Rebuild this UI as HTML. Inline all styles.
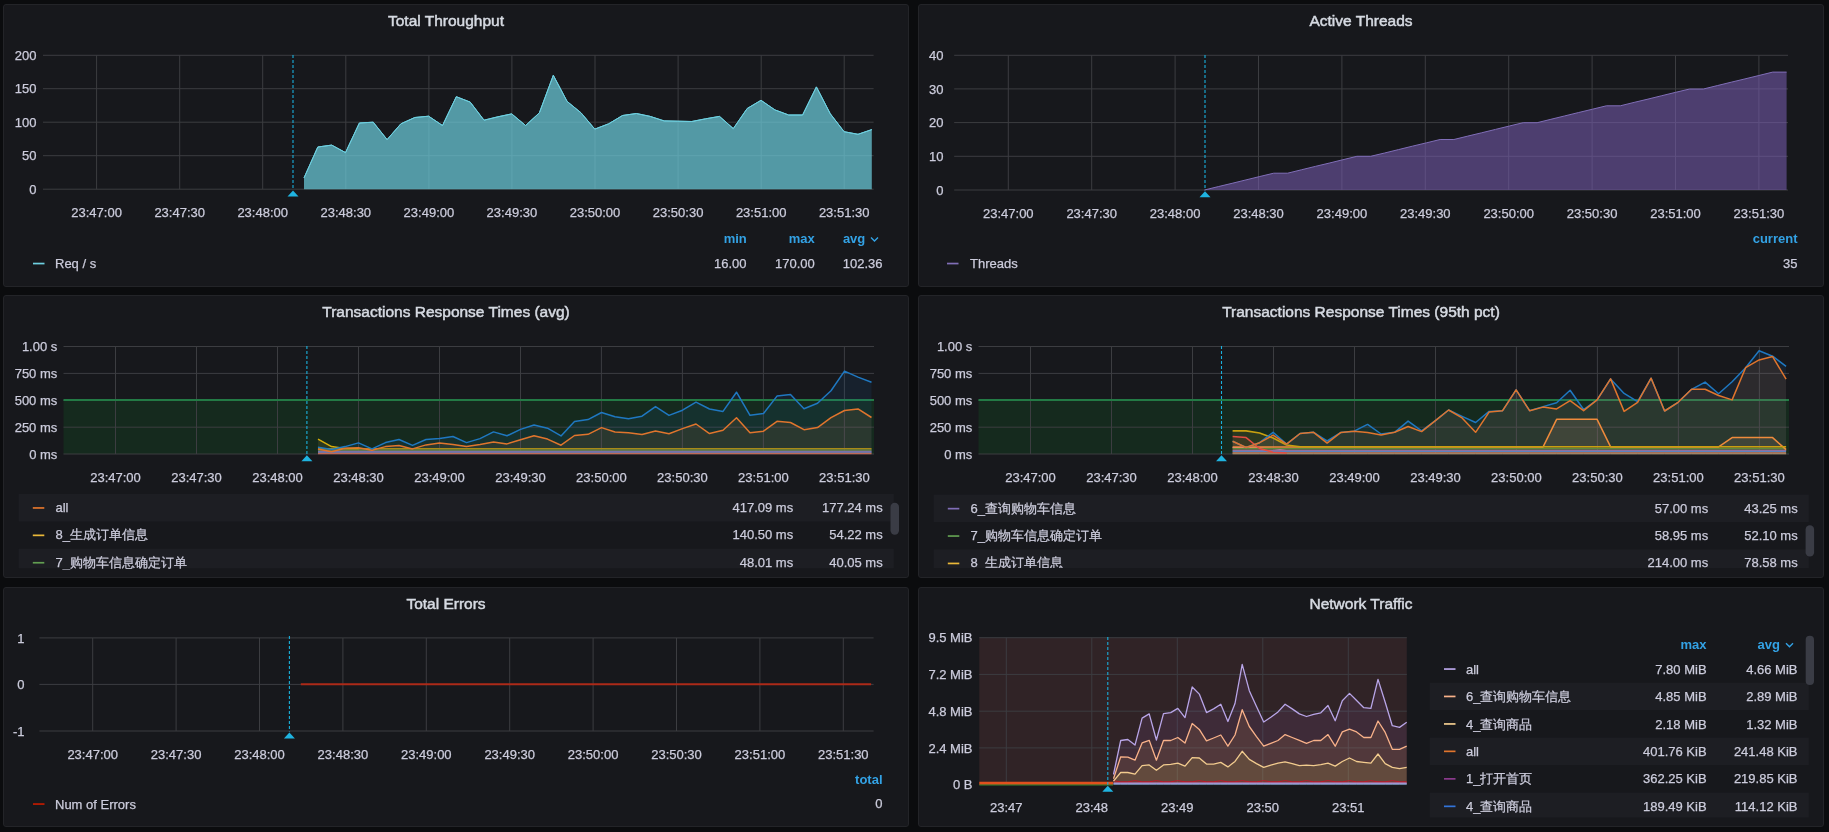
<!DOCTYPE html>
<html><head><meta charset="utf-8"><style>
html,body{margin:0;padding:0;background:#0b0c0e;width:1829px;height:832px;overflow:hidden}
.panel{position:absolute;background:#17181c;border:1px solid #232428;border-radius:3px}
svg{position:absolute;left:0;top:0;will-change:transform}
text{font-family:"Liberation Sans", sans-serif;}
.title{font-size:15.5px;fill:#d6dae2;stroke:#d6dae2;stroke-width:0.5px}
.lbl{font-size:13px;fill:#ccccdc;stroke:#ccccdc;stroke-width:0.25px}
.hdr{font-size:13px;font-weight:bold;fill:#33a2e5;}
</style></head><body>
<div class="panel" style="left:3px;top:4px;width:904px;height:281px"></div><div class="panel" style="left:918px;top:4px;width:904px;height:281px"></div><div class="panel" style="left:3px;top:295px;width:904px;height:281px"></div><div class="panel" style="left:918px;top:295px;width:904px;height:281px"></div><div class="panel" style="left:3px;top:587px;width:904px;height:238px"></div><div class="panel" style="left:918px;top:587px;width:904px;height:238px"></div>
<svg width="1829" height="832" viewBox="0 0 1829 832">
<text x="446.0" y="26.4" text-anchor="middle" class="title">Total Throughput</text>
<line x1="43.0" y1="55.3" x2="873.6" y2="55.3" stroke="#3c3d41" stroke-width="1"/>
<line x1="43.0" y1="88.7" x2="873.6" y2="88.7" stroke="#3c3d41" stroke-width="1"/>
<line x1="43.0" y1="122.2" x2="873.6" y2="122.2" stroke="#3c3d41" stroke-width="1"/>
<line x1="43.0" y1="155.7" x2="873.6" y2="155.7" stroke="#3c3d41" stroke-width="1"/>
<line x1="43.0" y1="189.2" x2="873.6" y2="189.2" stroke="#3c3d41" stroke-width="1"/>
<line x1="96.6" y1="55.3" x2="96.6" y2="189.2" stroke="#3c3d41" stroke-width="1" />
<line x1="179.7" y1="55.3" x2="179.7" y2="189.2" stroke="#3c3d41" stroke-width="1" />
<line x1="262.7" y1="55.3" x2="262.7" y2="189.2" stroke="#3c3d41" stroke-width="1" />
<line x1="345.8" y1="55.3" x2="345.8" y2="189.2" stroke="#3c3d41" stroke-width="1" />
<line x1="428.9" y1="55.3" x2="428.9" y2="189.2" stroke="#3c3d41" stroke-width="1" />
<line x1="511.9" y1="55.3" x2="511.9" y2="189.2" stroke="#3c3d41" stroke-width="1" />
<line x1="595.0" y1="55.3" x2="595.0" y2="189.2" stroke="#3c3d41" stroke-width="1" />
<line x1="678.1" y1="55.3" x2="678.1" y2="189.2" stroke="#3c3d41" stroke-width="1" />
<line x1="761.2" y1="55.3" x2="761.2" y2="189.2" stroke="#3c3d41" stroke-width="1" />
<line x1="844.2" y1="55.3" x2="844.2" y2="189.2" stroke="#3c3d41" stroke-width="1" />
<text x="36.5" y="59.9" text-anchor="end" class="lbl" >200</text>
<text x="36.5" y="93.3" text-anchor="end" class="lbl" >150</text>
<text x="36.5" y="126.8" text-anchor="end" class="lbl" >100</text>
<text x="36.5" y="160.3" text-anchor="end" class="lbl" >50</text>
<text x="36.5" y="193.8" text-anchor="end" class="lbl" >0</text>
<text x="96.6" y="216.6" text-anchor="middle" class="lbl" >23:47:00</text>
<text x="179.7" y="216.6" text-anchor="middle" class="lbl" >23:47:30</text>
<text x="262.7" y="216.6" text-anchor="middle" class="lbl" >23:48:00</text>
<text x="345.8" y="216.6" text-anchor="middle" class="lbl" >23:48:30</text>
<text x="428.9" y="216.6" text-anchor="middle" class="lbl" >23:49:00</text>
<text x="511.9" y="216.6" text-anchor="middle" class="lbl" >23:49:30</text>
<text x="595.0" y="216.6" text-anchor="middle" class="lbl" >23:50:00</text>
<text x="678.1" y="216.6" text-anchor="middle" class="lbl" >23:50:30</text>
<text x="761.2" y="216.6" text-anchor="middle" class="lbl" >23:51:00</text>
<text x="844.2" y="216.6" text-anchor="middle" class="lbl" >23:51:30</text>
<polygon points="304.0,189.2 304.0,177.9 317.8,147.0 331.7,145.1 345.5,152.6 359.4,123.0 373.2,122.2 387.1,139.6 400.9,123.8 414.8,117.5 428.6,116.2 442.5,125.5 456.3,96.7 470.2,102.1 484.0,120.2 497.9,116.8 511.7,113.9 525.6,125.5 539.4,112.8 553.3,75.3 567.1,101.4 581.0,112.8 594.8,129.1 608.7,123.8 622.5,115.5 636.4,113.5 650.2,116.4 664.1,120.9 677.9,121.2 691.8,121.5 705.6,118.8 719.5,116.4 733.3,128.6 747.2,108.5 761.0,100.3 774.9,109.9 788.7,115.0 802.6,115.0 816.4,86.9 830.3,113.8 844.1,131.7 858.0,134.3 871.8,129.6 871.8,189.2" fill="#6ed0e0" fill-opacity="0.0" stroke="none"/>
<polyline points="304.0,177.9 317.8,147.0 331.7,145.1 345.5,152.6 359.4,123.0 373.2,122.2 387.1,139.6 400.9,123.8 414.8,117.5 428.6,116.2 442.5,125.5 456.3,96.7 470.2,102.1 484.0,120.2 497.9,116.8 511.7,113.9 525.6,125.5 539.4,112.8 553.3,75.3 567.1,101.4 581.0,112.8 594.8,129.1 608.7,123.8 622.5,115.5 636.4,113.5 650.2,116.4 664.1,120.9 677.9,121.2 691.8,121.5 705.6,118.8 719.5,116.4 733.3,128.6 747.2,108.5 761.0,100.3 774.9,109.9 788.7,115.0 802.6,115.0 816.4,86.9 830.3,113.8 844.1,131.7 858.0,134.3 871.8,129.6" fill="none" stroke="#6ed0e0" stroke-width="1" stroke-linejoin="round"/>
<polygon points="304.0,189.2 304.0,177.9 317.8,147.0 331.7,145.1 345.5,152.6 359.4,123.0 373.2,122.2 387.1,139.6 400.9,123.8 414.8,117.5 428.6,116.2 442.5,125.5 456.3,96.7 470.2,102.1 484.0,120.2 497.9,116.8 511.7,113.9 525.6,125.5 539.4,112.8 553.3,75.3 567.1,101.4 581.0,112.8 594.8,129.1 608.7,123.8 622.5,115.5 636.4,113.5 650.2,116.4 664.1,120.9 677.9,121.2 691.8,121.5 705.6,118.8 719.5,116.4 733.3,128.6 747.2,108.5 761.0,100.3 774.9,109.9 788.7,115.0 802.6,115.0 816.4,86.9 830.3,113.8 844.1,131.7 858.0,134.3 871.8,129.6 871.8,189.2" fill="#6ed0e0" fill-opacity="0.70"/>
<polyline points="304.0,177.9 317.8,147.0 331.7,145.1 345.5,152.6 359.4,123.0 373.2,122.2 387.1,139.6 400.9,123.8 414.8,117.5 428.6,116.2 442.5,125.5 456.3,96.7 470.2,102.1 484.0,120.2 497.9,116.8 511.7,113.9 525.6,125.5 539.4,112.8 553.3,75.3 567.1,101.4 581.0,112.8 594.8,129.1 608.7,123.8 622.5,115.5 636.4,113.5 650.2,116.4 664.1,120.9 677.9,121.2 691.8,121.5 705.6,118.8 719.5,116.4 733.3,128.6 747.2,108.5 761.0,100.3 774.9,109.9 788.7,115.0 802.6,115.0 816.4,86.9 830.3,113.8 844.1,131.7 858.0,134.3 871.8,129.6" fill="none" stroke="#6ed0e0" stroke-width="1" stroke-linejoin="round"/>
<line x1="293.0" y1="55.0" x2="293.0" y2="189.5" stroke="#19b0dc" stroke-width="1.1" stroke-dasharray="3,2"/>
<polygon points="287.5,196.5 298.5,196.5 293.0,190.5" fill="#1fb3e0"/>
<rect x="33.0" y="262.7" width="11.5" height="1.7" fill="#6ed0e0"/>
<text x="55.0" y="268.0" text-anchor="start" class="lbl" >Req / s</text>
<text x="746.8" y="243.0" text-anchor="end" class="hdr" >min</text>
<text x="814.8" y="243.0" text-anchor="end" class="hdr" >max</text>
<text x="865.3" y="243.0" text-anchor="end" class="hdr" >avg</text>
<polyline points="871,237.5 874.5,241 878,237.5" fill="none" stroke="#33a2e5" stroke-width="1.4"/>
<text x="746.5" y="268.0" text-anchor="end" class="lbl" >16.00</text>
<text x="814.8" y="268.0" text-anchor="end" class="lbl" >170.00</text>
<text x="882.5" y="268.0" text-anchor="end" class="lbl" >102.36</text>
<text x="1361.0" y="26.4" text-anchor="middle" class="title">Active Threads</text>
<line x1="954.2" y1="55.3" x2="1788.0" y2="55.3" stroke="#3c3d41" stroke-width="1"/>
<line x1="954.2" y1="88.9" x2="1788.0" y2="88.9" stroke="#3c3d41" stroke-width="1"/>
<line x1="954.2" y1="122.6" x2="1788.0" y2="122.6" stroke="#3c3d41" stroke-width="1"/>
<line x1="954.2" y1="156.3" x2="1788.0" y2="156.3" stroke="#3c3d41" stroke-width="1"/>
<line x1="954.2" y1="190.0" x2="1788.0" y2="190.0" stroke="#3c3d41" stroke-width="1"/>
<line x1="1008.3" y1="55.3" x2="1008.3" y2="190.0" stroke="#3c3d41" stroke-width="1" />
<line x1="1091.7" y1="55.3" x2="1091.7" y2="190.0" stroke="#3c3d41" stroke-width="1" />
<line x1="1175.1" y1="55.3" x2="1175.1" y2="190.0" stroke="#3c3d41" stroke-width="1" />
<line x1="1258.5" y1="55.3" x2="1258.5" y2="190.0" stroke="#3c3d41" stroke-width="1" />
<line x1="1341.9" y1="55.3" x2="1341.9" y2="190.0" stroke="#3c3d41" stroke-width="1" />
<line x1="1425.3" y1="55.3" x2="1425.3" y2="190.0" stroke="#3c3d41" stroke-width="1" />
<line x1="1508.7" y1="55.3" x2="1508.7" y2="190.0" stroke="#3c3d41" stroke-width="1" />
<line x1="1592.1" y1="55.3" x2="1592.1" y2="190.0" stroke="#3c3d41" stroke-width="1" />
<line x1="1675.5" y1="55.3" x2="1675.5" y2="190.0" stroke="#3c3d41" stroke-width="1" />
<line x1="1758.9" y1="55.3" x2="1758.9" y2="190.0" stroke="#3c3d41" stroke-width="1" />
<text x="943.5" y="59.9" text-anchor="end" class="lbl" >40</text>
<text x="943.5" y="93.5" text-anchor="end" class="lbl" >30</text>
<text x="943.5" y="127.2" text-anchor="end" class="lbl" >20</text>
<text x="943.5" y="160.9" text-anchor="end" class="lbl" >10</text>
<text x="943.5" y="194.6" text-anchor="end" class="lbl" >0</text>
<text x="1008.3" y="218.0" text-anchor="middle" class="lbl" >23:47:00</text>
<text x="1091.7" y="218.0" text-anchor="middle" class="lbl" >23:47:30</text>
<text x="1175.1" y="218.0" text-anchor="middle" class="lbl" >23:48:00</text>
<text x="1258.5" y="218.0" text-anchor="middle" class="lbl" >23:48:30</text>
<text x="1341.9" y="218.0" text-anchor="middle" class="lbl" >23:49:00</text>
<text x="1425.3" y="218.0" text-anchor="middle" class="lbl" >23:49:30</text>
<text x="1508.7" y="218.0" text-anchor="middle" class="lbl" >23:50:00</text>
<text x="1592.1" y="218.0" text-anchor="middle" class="lbl" >23:50:30</text>
<text x="1675.5" y="218.0" text-anchor="middle" class="lbl" >23:51:00</text>
<text x="1758.9" y="218.0" text-anchor="middle" class="lbl" >23:51:30</text>
<polygon points="1204.4,190.0 1204.4,190.0 1218.3,186.6 1232.1,183.3 1246.0,179.9 1259.8,176.5 1273.7,173.2 1287.6,173.2 1301.4,169.8 1315.3,166.4 1329.2,163.1 1343.0,159.7 1356.9,156.3 1370.7,156.3 1384.6,153.0 1398.5,149.6 1412.3,146.2 1426.2,142.9 1440.1,139.5 1453.9,139.5 1467.8,136.1 1481.6,132.8 1495.5,129.4 1509.4,126.0 1523.2,122.7 1537.1,122.7 1550.9,119.3 1564.8,115.9 1578.7,112.5 1592.5,109.2 1606.4,105.8 1620.3,105.8 1634.1,102.4 1648.0,99.1 1661.8,95.7 1675.7,92.3 1689.6,89.0 1703.4,89.0 1717.3,85.6 1731.2,82.2 1745.0,78.9 1758.9,75.5 1772.7,72.1 1786.6,72.1 1786.6,190.0" fill="#7a5fb5" fill-opacity="0.55"/>
<polyline points="1204.4,190.0 1218.3,186.6 1232.1,183.3 1246.0,179.9 1259.8,176.5 1273.7,173.2 1287.6,173.2 1301.4,169.8 1315.3,166.4 1329.2,163.1 1343.0,159.7 1356.9,156.3 1370.7,156.3 1384.6,153.0 1398.5,149.6 1412.3,146.2 1426.2,142.9 1440.1,139.5 1453.9,139.5 1467.8,136.1 1481.6,132.8 1495.5,129.4 1509.4,126.0 1523.2,122.7 1537.1,122.7 1550.9,119.3 1564.8,115.9 1578.7,112.5 1592.5,109.2 1606.4,105.8 1620.3,105.8 1634.1,102.4 1648.0,99.1 1661.8,95.7 1675.7,92.3 1689.6,89.0 1703.4,89.0 1717.3,85.6 1731.2,82.2 1745.0,78.9 1758.9,75.5 1772.7,72.1 1786.6,72.1" fill="none" stroke="#806eb7" stroke-width="1" stroke-linejoin="round"/>
<line x1="1205.0" y1="55.0" x2="1205.0" y2="190.3" stroke="#19b0dc" stroke-width="1.1" stroke-dasharray="3,2"/>
<polygon points="1199.5,197.3 1210.5,197.3 1205.0,191.3" fill="#1fb3e0"/>
<rect x="947.0" y="262.7" width="11.5" height="1.7" fill="#806eb7"/>
<text x="970.0" y="268.0" text-anchor="start" class="lbl" >Threads</text>
<text x="1797.5" y="243.0" text-anchor="end" class="hdr" >current</text>
<text x="1797.5" y="268.0" text-anchor="end" class="lbl" >35</text>
<text x="446.0" y="317.4" text-anchor="middle" class="title">Transactions Response Times (avg)</text>
<rect x="63.5" y="400.3" width="810.5" height="53.7" fill="rgb(11,237,50)" fill-opacity="0.09"/>
<line x1="63.5" y1="346.5" x2="874.0" y2="346.5" stroke="#3c3d41" stroke-width="1"/>
<line x1="63.5" y1="373.4" x2="874.0" y2="373.4" stroke="#3c3d41" stroke-width="1"/>
<line x1="63.5" y1="400.3" x2="874.0" y2="400.3" stroke="#3c3d41" stroke-width="1"/>
<line x1="63.5" y1="427.2" x2="874.0" y2="427.2" stroke="#3c3d41" stroke-width="1"/>
<line x1="63.5" y1="454.0" x2="874.0" y2="454.0" stroke="#3c3d41" stroke-width="1"/>
<line x1="115.5" y1="346.5" x2="115.5" y2="454.0" stroke="#3c3d41" stroke-width="1" />
<line x1="196.5" y1="346.5" x2="196.5" y2="454.0" stroke="#3c3d41" stroke-width="1" />
<line x1="277.5" y1="346.5" x2="277.5" y2="454.0" stroke="#3c3d41" stroke-width="1" />
<line x1="358.5" y1="346.5" x2="358.5" y2="454.0" stroke="#3c3d41" stroke-width="1" />
<line x1="439.5" y1="346.5" x2="439.5" y2="454.0" stroke="#3c3d41" stroke-width="1" />
<line x1="520.5" y1="346.5" x2="520.5" y2="454.0" stroke="#3c3d41" stroke-width="1" />
<line x1="601.4" y1="346.5" x2="601.4" y2="454.0" stroke="#3c3d41" stroke-width="1" />
<line x1="682.4" y1="346.5" x2="682.4" y2="454.0" stroke="#3c3d41" stroke-width="1" />
<line x1="763.4" y1="346.5" x2="763.4" y2="454.0" stroke="#3c3d41" stroke-width="1" />
<line x1="844.4" y1="346.5" x2="844.4" y2="454.0" stroke="#3c3d41" stroke-width="1" />
<line x1="63.5" y1="400" x2="874.0" y2="400" stroke="#237a45" stroke-width="2.2"/>
<text x="57.3" y="351.1" text-anchor="end" class="lbl" >1.00 s</text>
<text x="57.3" y="378.0" text-anchor="end" class="lbl" >750 ms</text>
<text x="57.3" y="404.9" text-anchor="end" class="lbl" >500 ms</text>
<text x="57.3" y="431.8" text-anchor="end" class="lbl" >250 ms</text>
<text x="57.3" y="458.6" text-anchor="end" class="lbl" >0 ms</text>
<text x="115.5" y="481.5" text-anchor="middle" class="lbl" >23:47:00</text>
<text x="196.5" y="481.5" text-anchor="middle" class="lbl" >23:47:30</text>
<text x="277.5" y="481.5" text-anchor="middle" class="lbl" >23:48:00</text>
<text x="358.5" y="481.5" text-anchor="middle" class="lbl" >23:48:30</text>
<text x="439.5" y="481.5" text-anchor="middle" class="lbl" >23:49:00</text>
<text x="520.5" y="481.5" text-anchor="middle" class="lbl" >23:49:30</text>
<text x="601.4" y="481.5" text-anchor="middle" class="lbl" >23:50:00</text>
<text x="682.4" y="481.5" text-anchor="middle" class="lbl" >23:50:30</text>
<text x="763.4" y="481.5" text-anchor="middle" class="lbl" >23:51:00</text>
<text x="844.4" y="481.5" text-anchor="middle" class="lbl" >23:51:30</text>
<polygon points="318.0,454.0 318.0,447.2 331.5,449.5 345.0,446.6 358.5,442.9 372.0,448.9 385.5,442.6 399.0,439.5 412.5,445.4 426.0,439.5 439.5,438.6 453.0,436.5 466.5,442.6 480.0,438.6 493.5,431.9 507.0,435.8 520.5,429.4 534.0,425.0 547.5,428.2 561.0,435.9 574.5,421.6 588.0,419.6 601.5,412.5 615.0,416.7 628.5,418.7 642.0,416.2 655.5,406.6 669.0,415.4 682.5,410.2 696.0,402.2 709.5,409.0 723.0,411.4 736.5,392.2 750.0,415.3 763.5,413.5 777.0,396.1 790.5,394.6 804.0,408.7 817.5,403.3 831.0,390.7 844.5,371.1 858.0,377.1 871.5,382.2 871.5,454.0" fill="#1F78C1" fill-opacity="0.1"/>
<polygon points="318.0,454.0 318.0,448.9 331.5,451.8 345.0,448.3 358.5,447.7 372.0,450.3 385.5,446.6 399.0,445.4 412.5,448.9 426.0,444.9 439.5,443.1 453.0,444.5 466.5,446.6 480.0,444.5 493.5,442.0 507.0,443.9 520.5,439.7 534.0,435.7 547.5,439.1 561.0,445.2 574.5,435.5 588.0,434.3 601.5,427.6 615.0,432.0 628.5,432.8 642.0,434.5 655.5,431.1 669.0,433.7 682.5,428.6 696.0,424.0 709.5,433.6 723.0,430.3 736.5,417.7 750.0,432.7 763.5,431.2 777.0,421.3 790.5,422.5 804.0,429.7 817.5,427.6 831.0,417.7 844.5,410.5 858.0,408.9 871.5,417.5 871.5,454.0" fill="#EF843C" fill-opacity="0.1"/>
<polygon points="318.0,454.0 318.0,439.1 331.5,446.6 345.0,448.4 358.5,448.4 372.0,448.4 385.5,448.4 399.0,448.4 412.5,448.4 426.0,448.4 439.5,448.4 453.0,448.4 466.5,448.4 480.0,448.4 493.5,448.4 507.0,448.4 520.5,448.4 534.0,448.4 547.5,448.4 561.0,448.4 574.5,448.4 588.0,448.4 601.5,448.4 615.0,448.4 628.5,448.4 642.0,448.4 655.5,448.4 669.0,448.4 682.5,448.4 696.0,448.4 709.5,448.4 723.0,448.4 736.5,448.4 750.0,448.4 763.5,448.4 777.0,448.4 790.5,448.4 804.0,448.4 817.5,448.4 831.0,448.4 844.5,448.4 858.0,448.4 871.5,448.4 871.5,454.0" fill="#EAB839" fill-opacity="0.1"/>
<polyline points="318.0,448.7 331.5,448.7 345.0,448.7 358.5,448.7 372.0,448.7 385.5,448.7 399.0,448.7 412.5,448.7 426.0,448.7 439.5,448.7 453.0,448.7 466.5,448.7 480.0,448.7 493.5,448.7 507.0,448.7 520.5,448.7 534.0,448.7 547.5,448.7 561.0,448.7 574.5,448.7 588.0,448.7 601.5,448.7 615.0,448.7 628.5,448.7 642.0,448.7 655.5,448.7 669.0,448.7 682.5,448.7 696.0,448.7 709.5,448.7 723.0,448.7 736.5,448.7 750.0,448.7 763.5,448.7 777.0,448.7 790.5,448.7 804.0,448.7 817.5,448.7 831.0,448.7 844.5,448.7 858.0,448.7 871.5,448.7" fill="none" stroke="#a88a18" stroke-width="1.6" stroke-linejoin="round"/>
<polyline points="318.0,450.2 331.5,450.2 345.0,450.2 358.5,450.2 372.0,450.2 385.5,450.2 399.0,450.2 412.5,450.2 426.0,450.2 439.5,450.2 453.0,450.2 466.5,450.2 480.0,450.2 493.5,450.2 507.0,450.2 520.5,450.2 534.0,450.2 547.5,450.2 561.0,450.2 574.5,450.2 588.0,450.2 601.5,450.2 615.0,450.2 628.5,450.2 642.0,450.2 655.5,450.2 669.0,450.2 682.5,450.2 696.0,450.2 709.5,450.2 723.0,450.2 736.5,450.2 750.0,450.2 763.5,450.2 777.0,450.2 790.5,450.2 804.0,450.2 817.5,450.2 831.0,450.2 844.5,450.2 858.0,450.2 871.5,450.2" fill="none" stroke="#6a8a40" stroke-width="1.3" stroke-linejoin="round"/>
<polyline points="318.0,451.3 331.5,451.3 345.0,451.3 358.5,451.3 372.0,451.3 385.5,451.3 399.0,451.3 412.5,451.3 426.0,451.3 439.5,451.3 453.0,451.3 466.5,451.3 480.0,451.3 493.5,451.3 507.0,451.3 520.5,451.3 534.0,451.3 547.5,451.3 561.0,451.3 574.5,451.3 588.0,451.3 601.5,451.3 615.0,451.3 628.5,451.3 642.0,451.3 655.5,451.3 669.0,451.3 682.5,451.3 696.0,451.3 709.5,451.3 723.0,451.3 736.5,451.3 750.0,451.3 763.5,451.3 777.0,451.3 790.5,451.3 804.0,451.3 817.5,451.3 831.0,451.3 844.5,451.3 858.0,451.3 871.5,451.3" fill="none" stroke="#8070a8" stroke-width="1.2" stroke-linejoin="round"/>
<polyline points="318.0,452.4 331.5,452.4 345.0,452.4 358.5,452.4 372.0,452.4 385.5,452.4 399.0,452.4 412.5,452.4 426.0,452.4 439.5,452.4 453.0,452.4 466.5,452.4 480.0,452.4 493.5,452.4 507.0,452.4 520.5,452.4 534.0,452.4 547.5,452.4 561.0,452.4 574.5,452.4 588.0,452.4 601.5,452.4 615.0,452.4 628.5,452.4 642.0,452.4 655.5,452.4 669.0,452.4 682.5,452.4 696.0,452.4 709.5,452.4 723.0,452.4 736.5,452.4 750.0,452.4 763.5,452.4 777.0,452.4 790.5,452.4 804.0,452.4 817.5,452.4 831.0,452.4 844.5,452.4 858.0,452.4 871.5,452.4" fill="none" stroke="#5a7ab8" stroke-width="1.2" stroke-linejoin="round"/>
<polyline points="318.0,453.5 331.5,453.5 345.0,453.5 358.5,453.5 372.0,453.5 385.5,453.5 399.0,453.5 412.5,453.5 426.0,453.5 439.5,453.5 453.0,453.5 466.5,453.5 480.0,453.5 493.5,453.5 507.0,453.5 520.5,453.5 534.0,453.5 547.5,453.5 561.0,453.5 574.5,453.5 588.0,453.5 601.5,453.5 615.0,453.5 628.5,453.5 642.0,453.5 655.5,453.5 669.0,453.5 682.5,453.5 696.0,453.5 709.5,453.5 723.0,453.5 736.5,453.5 750.0,453.5 763.5,453.5 777.0,453.5 790.5,453.5 804.0,453.5 817.5,453.5 831.0,453.5 844.5,453.5 858.0,453.5 871.5,453.5" fill="none" stroke="#c06a58" stroke-width="1.3" stroke-linejoin="round"/>
<polyline points="318.0,439.1 331.5,446.6 345.0,448.4 358.5,448.4" fill="none" stroke="#D4AC0D" stroke-width="1.5" stroke-linejoin="round"/>
<polyline points="318.0,448.9 331.5,451.8 345.0,448.3 358.5,447.7 372.0,450.3 385.5,446.6 399.0,445.4 412.5,448.9 426.0,444.9 439.5,443.1 453.0,444.5 466.5,446.6 480.0,444.5 493.5,442.0 507.0,443.9 520.5,439.7 534.0,435.7 547.5,439.1 561.0,445.2 574.5,435.5 588.0,434.3 601.5,427.6 615.0,432.0 628.5,432.8 642.0,434.5 655.5,431.1 669.0,433.7 682.5,428.6 696.0,424.0 709.5,433.6 723.0,430.3 736.5,417.7 750.0,432.7 763.5,431.2 777.0,421.3 790.5,422.5 804.0,429.7 817.5,427.6 831.0,417.7 844.5,410.5 858.0,408.9 871.5,417.5" fill="none" stroke="#E0752D" stroke-width="1.5" stroke-linejoin="round"/>
<polyline points="318.0,447.2 331.5,449.5 345.0,446.6 358.5,442.9 372.0,448.9 385.5,442.6 399.0,439.5 412.5,445.4 426.0,439.5 439.5,438.6 453.0,436.5 466.5,442.6 480.0,438.6 493.5,431.9 507.0,435.8 520.5,429.4 534.0,425.0 547.5,428.2 561.0,435.9 574.5,421.6 588.0,419.6 601.5,412.5 615.0,416.7 628.5,418.7 642.0,416.2 655.5,406.6 669.0,415.4 682.5,410.2 696.0,402.2 709.5,409.0 723.0,411.4 736.5,392.2 750.0,415.3 763.5,413.5 777.0,396.1 790.5,394.6 804.0,408.7 817.5,403.3 831.0,390.7 844.5,371.1 858.0,377.1 871.5,382.2" fill="none" stroke="#1F78C1" stroke-width="1.5" stroke-linejoin="round"/>
<line x1="306.9" y1="346.0" x2="306.9" y2="454.3" stroke="#19b0dc" stroke-width="1.1" stroke-dasharray="3,2"/>
<polygon points="301.4,461.3 312.4,461.3 306.9,455.3" fill="#1fb3e0"/>
<clipPath id="clip3"><rect x="3" y="480" width="906" height="89.60000000000002"/></clipPath>
<g clip-path="url(#clip3)">
<rect x="18.6" y="493.9" width="875.2" height="27.6" fill="rgba(204,204,220,0.035)"/>
<rect x="32.8" y="507.1" width="11.5" height="1.7" fill="#E0752D"/>
<text x="55.5" y="511.8" text-anchor="start" class="lbl" >all</text>
<text x="793.2" y="511.8" text-anchor="end" class="lbl" >417.09 ms</text>
<text x="882.7" y="511.8" text-anchor="end" class="lbl" >177.24 ms</text>
<rect x="32.8" y="534.5" width="11.5" height="1.7" fill="#EAB839"/>
<text x="55.5" y="539.2" text-anchor="start" class="lbl" >8_生成订单信息</text>
<text x="793.2" y="539.2" text-anchor="end" class="lbl" >140.50 ms</text>
<text x="882.7" y="539.2" text-anchor="end" class="lbl" >54.22 ms</text>
<rect x="18.6" y="548.7" width="875.2" height="19.6" fill="rgba(204,204,220,0.035)"/>
<rect x="32.8" y="561.9" width="11.5" height="1.7" fill="#629E51"/>
<text x="55.5" y="566.6" text-anchor="start" class="lbl" >7_购物车信息确定订单</text>
<text x="793.2" y="566.6" text-anchor="end" class="lbl" >48.01 ms</text>
<text x="882.7" y="566.6" text-anchor="end" class="lbl" >40.05 ms</text>
</g>
<rect x="890.5" y="502.8" width="8.5" height="31.9" rx="4.2" fill="#3a3c45"/>
<text x="1361.0" y="317.4" text-anchor="middle" class="title">Transactions Response Times (95th pct)</text>
<rect x="978.5" y="400.3" width="810.5" height="53.7" fill="rgb(11,237,50)" fill-opacity="0.09"/>
<line x1="978.5" y1="346.5" x2="1789.0" y2="346.5" stroke="#3c3d41" stroke-width="1"/>
<line x1="978.5" y1="373.4" x2="1789.0" y2="373.4" stroke="#3c3d41" stroke-width="1"/>
<line x1="978.5" y1="400.3" x2="1789.0" y2="400.3" stroke="#3c3d41" stroke-width="1"/>
<line x1="978.5" y1="427.2" x2="1789.0" y2="427.2" stroke="#3c3d41" stroke-width="1"/>
<line x1="978.5" y1="454.0" x2="1789.0" y2="454.0" stroke="#3c3d41" stroke-width="1"/>
<line x1="1030.5" y1="346.5" x2="1030.5" y2="454.0" stroke="#3c3d41" stroke-width="1" />
<line x1="1111.5" y1="346.5" x2="1111.5" y2="454.0" stroke="#3c3d41" stroke-width="1" />
<line x1="1192.5" y1="346.5" x2="1192.5" y2="454.0" stroke="#3c3d41" stroke-width="1" />
<line x1="1273.5" y1="346.5" x2="1273.5" y2="454.0" stroke="#3c3d41" stroke-width="1" />
<line x1="1354.5" y1="346.5" x2="1354.5" y2="454.0" stroke="#3c3d41" stroke-width="1" />
<line x1="1435.5" y1="346.5" x2="1435.5" y2="454.0" stroke="#3c3d41" stroke-width="1" />
<line x1="1516.4" y1="346.5" x2="1516.4" y2="454.0" stroke="#3c3d41" stroke-width="1" />
<line x1="1597.4" y1="346.5" x2="1597.4" y2="454.0" stroke="#3c3d41" stroke-width="1" />
<line x1="1678.4" y1="346.5" x2="1678.4" y2="454.0" stroke="#3c3d41" stroke-width="1" />
<line x1="1759.4" y1="346.5" x2="1759.4" y2="454.0" stroke="#3c3d41" stroke-width="1" />
<line x1="978.5" y1="400" x2="1789.0" y2="400" stroke="#237a45" stroke-width="2.2"/>
<text x="972.3" y="351.1" text-anchor="end" class="lbl" >1.00 s</text>
<text x="972.3" y="378.0" text-anchor="end" class="lbl" >750 ms</text>
<text x="972.3" y="404.9" text-anchor="end" class="lbl" >500 ms</text>
<text x="972.3" y="431.8" text-anchor="end" class="lbl" >250 ms</text>
<text x="972.3" y="458.6" text-anchor="end" class="lbl" >0 ms</text>
<text x="1030.5" y="481.5" text-anchor="middle" class="lbl" >23:47:00</text>
<text x="1111.5" y="481.5" text-anchor="middle" class="lbl" >23:47:30</text>
<text x="1192.5" y="481.5" text-anchor="middle" class="lbl" >23:48:00</text>
<text x="1273.5" y="481.5" text-anchor="middle" class="lbl" >23:48:30</text>
<text x="1354.5" y="481.5" text-anchor="middle" class="lbl" >23:49:00</text>
<text x="1435.5" y="481.5" text-anchor="middle" class="lbl" >23:49:30</text>
<text x="1516.4" y="481.5" text-anchor="middle" class="lbl" >23:50:00</text>
<text x="1597.4" y="481.5" text-anchor="middle" class="lbl" >23:50:30</text>
<text x="1678.4" y="481.5" text-anchor="middle" class="lbl" >23:51:00</text>
<text x="1759.4" y="481.5" text-anchor="middle" class="lbl" >23:51:30</text>
<polygon points="1232.6,454.0 1232.6,441.3 1246.1,447.5 1259.6,442.7 1273.1,432.3 1286.6,444.1 1300.1,433.5 1313.6,432.3 1327.1,441.0 1340.6,432.6 1354.1,431.2 1367.6,424.4 1381.1,434.0 1394.6,432.3 1408.1,421.1 1421.6,430.9 1435.1,420.8 1448.6,410.0 1462.1,416.4 1475.6,422.5 1489.1,411.4 1502.6,410.7 1516.1,389.8 1529.6,410.7 1543.1,406.6 1556.6,402.7 1570.1,390.2 1583.6,409.5 1597.1,399.9 1610.6,378.9 1624.1,393.4 1637.6,401.7 1651.1,378.2 1664.6,411.0 1678.1,402.3 1691.6,389.3 1705.1,382.1 1718.6,393.7 1732.1,381.8 1745.6,367.7 1759.1,350.8 1772.6,356.2 1786.1,366.3 1786.1,454.0" fill="#1F78C1" fill-opacity="0.1"/>
<polygon points="1232.6,454.0 1232.6,441.3 1246.1,447.5 1259.6,442.7 1273.1,435.2 1286.6,444.1 1300.1,433.5 1313.6,432.3 1327.1,443.1 1340.6,432.6 1354.1,431.2 1367.6,432.6 1381.1,434.9 1394.6,432.3 1408.1,426.5 1421.6,431.6 1435.1,420.8 1448.6,410.0 1462.1,417.9 1475.6,432.3 1489.1,412.1 1502.6,410.7 1516.1,389.8 1529.6,410.7 1543.1,407.1 1556.6,408.9 1570.1,400.6 1583.6,410.7 1597.1,399.9 1610.6,378.9 1624.1,411.4 1637.6,402.3 1651.1,378.2 1664.6,411.0 1678.1,402.3 1691.6,389.3 1705.1,389.3 1718.6,395.5 1732.1,399.9 1745.6,367.7 1759.1,359.9 1772.6,356.6 1786.1,379.2 1786.1,454.0" fill="#EF843C" fill-opacity="0.1"/>
<polygon points="1232.6,454.0 1232.6,446.9 1246.1,446.9 1259.6,446.9 1273.1,446.9 1286.6,446.9 1300.1,446.9 1313.6,446.9 1327.1,446.9 1340.6,446.9 1354.1,446.9 1367.6,446.9 1381.1,446.9 1394.6,446.9 1408.1,446.9 1421.6,446.9 1435.1,446.9 1448.6,446.9 1462.1,446.9 1475.6,446.9 1489.1,446.9 1502.6,446.9 1516.1,446.9 1529.6,446.9 1543.1,446.9 1556.6,419.3 1570.1,419.3 1583.6,419.3 1597.1,419.3 1610.6,446.9 1624.1,446.9 1637.6,446.9 1651.1,446.9 1664.6,446.9 1678.1,446.9 1691.6,446.9 1705.1,446.9 1718.6,446.9 1732.1,437.6 1745.6,437.6 1759.1,437.6 1772.6,437.6 1786.1,449.6 1786.1,454.0" fill="#F9BA8F" fill-opacity="0.1"/>
<polygon points="1232.6,454.0 1232.6,430.9 1246.1,430.9 1259.6,433.0 1273.1,438.0 1286.6,445.0 1300.1,446.8 1313.6,446.8 1327.1,446.8 1340.6,446.8 1354.1,446.8 1367.6,446.8 1381.1,446.8 1394.6,446.8 1408.1,446.8 1421.6,446.8 1435.1,446.8 1448.6,446.8 1462.1,446.8 1475.6,446.8 1489.1,446.8 1502.6,446.8 1516.1,446.8 1529.6,446.8 1543.1,446.8 1556.6,446.8 1570.1,446.8 1583.6,446.8 1597.1,446.8 1610.6,446.8 1624.1,446.8 1637.6,446.8 1651.1,446.8 1664.6,446.8 1678.1,446.8 1691.6,446.8 1705.1,446.8 1718.6,446.8 1732.1,446.8 1745.6,446.8 1759.1,446.8 1772.6,446.8 1786.1,446.8 1786.1,454.0" fill="#EAB839" fill-opacity="0.1"/>
<polygon points="1232.6,454.0 1232.6,436.6 1246.1,437.6 1259.6,448.5 1273.1,452.2 1286.6,452.9 1300.1,452.9 1313.6,452.9 1327.1,452.9 1340.6,452.9 1354.1,452.9 1367.6,452.9 1381.1,452.9 1394.6,452.9 1408.1,452.9 1421.6,452.9 1435.1,452.9 1448.6,452.9 1462.1,452.9 1475.6,452.9 1489.1,452.9 1502.6,452.9 1516.1,452.9 1529.6,452.9 1543.1,452.9 1556.6,452.9 1570.1,452.9 1583.6,452.9 1597.1,452.9 1610.6,452.9 1624.1,452.9 1637.6,452.9 1651.1,452.9 1664.6,452.9 1678.1,452.9 1691.6,452.9 1705.1,452.9 1718.6,452.9 1732.1,452.9 1745.6,452.9 1759.1,452.9 1772.6,452.9 1786.1,452.9 1786.1,454.0" fill="#E24D42" fill-opacity="0.1"/>
<polyline points="1232.6,447.5 1246.1,447.5 1273.1,448.5 1286.6,450.5 1300.1,450.5 1313.6,450.5 1327.1,450.5 1340.6,450.5 1354.1,450.5 1367.6,450.5 1381.1,450.5 1394.6,450.5 1408.1,450.5 1421.6,450.5 1435.1,450.5 1448.6,450.5 1462.1,450.5 1475.6,450.5 1489.1,450.5 1502.6,450.5 1516.1,450.5 1529.6,450.5 1543.1,450.5 1556.6,450.5 1570.1,450.5 1583.6,450.5 1597.1,450.5 1610.6,450.5 1624.1,450.5 1637.6,450.5 1651.1,450.5 1664.6,450.5 1678.1,450.5 1691.6,450.5 1705.1,450.5 1718.6,450.5 1732.1,450.5 1745.6,450.5 1759.1,450.5 1772.6,450.5 1786.1,450.5" fill="none" stroke="#D683CE" stroke-width="1" stroke-linejoin="round"/>
<polyline points="1232.6,448.7 1246.1,448.7 1259.6,448.7 1273.1,448.7 1286.6,448.7 1300.1,448.7 1313.6,448.7 1327.1,448.7 1340.6,448.7 1354.1,448.7 1367.6,448.7 1381.1,448.7 1394.6,448.7 1408.1,448.7 1421.6,448.7 1435.1,448.7 1448.6,448.7 1462.1,448.7 1475.6,448.7 1489.1,448.7 1502.6,448.7 1516.1,448.7 1529.6,448.7 1543.1,448.7 1556.6,448.7 1570.1,448.7 1583.6,448.7 1597.1,448.7 1610.6,448.7 1624.1,448.7 1637.6,448.7 1651.1,448.7 1664.6,448.7 1678.1,448.7 1691.6,448.7 1705.1,448.7 1718.6,448.7 1732.1,448.7 1745.6,448.7 1759.1,448.7 1772.6,448.7 1786.1,448.7" fill="none" stroke="#5E8A3A" stroke-width="1.2" stroke-linejoin="round"/>
<polyline points="1232.6,450.3 1246.1,450.3 1259.6,450.3 1273.1,450.3 1286.6,450.3 1300.1,450.3 1313.6,450.3 1327.1,450.3 1340.6,450.3 1354.1,450.3 1367.6,450.3 1381.1,450.3 1394.6,450.3 1408.1,450.3 1421.6,450.3 1435.1,450.3 1448.6,450.3 1462.1,450.3 1475.6,450.3 1489.1,450.3 1502.6,450.3 1516.1,450.3 1529.6,450.3 1543.1,450.3 1556.6,450.3 1570.1,450.3 1583.6,450.3 1597.1,450.3 1610.6,450.3 1624.1,450.3 1637.6,450.3 1651.1,450.3 1664.6,450.3 1678.1,450.3 1691.6,450.3 1705.1,450.3 1718.6,450.3 1732.1,450.3 1745.6,450.3 1759.1,450.3 1772.6,450.3 1786.1,450.3" fill="none" stroke="#9070A0" stroke-width="1.3" stroke-linejoin="round"/>
<polyline points="1232.6,451.5 1246.1,451.5 1259.6,451.5 1273.1,451.5 1286.6,451.5 1300.1,451.5 1313.6,451.5 1327.1,451.5 1340.6,451.5 1354.1,451.5 1367.6,451.5 1381.1,451.5 1394.6,451.5 1408.1,451.5 1421.6,451.5 1435.1,451.5 1448.6,451.5 1462.1,451.5 1475.6,451.5 1489.1,451.5 1502.6,451.5 1516.1,451.5 1529.6,451.5 1543.1,451.5 1556.6,451.5 1570.1,451.5 1583.6,451.5 1597.1,451.5 1610.6,451.5 1624.1,451.5 1637.6,451.5 1651.1,451.5 1664.6,451.5 1678.1,451.5 1691.6,451.5 1705.1,451.5 1718.6,451.5 1732.1,451.5 1745.6,451.5 1759.1,451.5 1772.6,451.5 1786.1,451.5" fill="none" stroke="#5A82C0" stroke-width="1.2" stroke-linejoin="round"/>
<polyline points="1232.6,452.9 1246.1,452.9 1259.6,452.9 1273.1,452.9 1286.6,452.9 1300.1,452.9 1313.6,452.9 1327.1,452.9 1340.6,452.9 1354.1,452.9 1367.6,452.9 1381.1,452.9 1394.6,452.9 1408.1,452.9 1421.6,452.9 1435.1,452.9 1448.6,452.9 1462.1,452.9 1475.6,452.9 1489.1,452.9 1502.6,452.9 1516.1,452.9 1529.6,452.9 1543.1,452.9 1556.6,452.9 1570.1,452.9 1583.6,452.9 1597.1,452.9 1610.6,452.9 1624.1,452.9 1637.6,452.9 1651.1,452.9 1664.6,452.9 1678.1,452.9 1691.6,452.9 1705.1,452.9 1718.6,452.9 1732.1,452.9 1745.6,452.9 1759.1,452.9 1772.6,452.9 1786.1,452.9" fill="none" stroke="#C07860" stroke-width="1.3" stroke-linejoin="round"/>
<polyline points="1232.6,453.8 1246.1,453.8 1259.6,453.8 1273.1,453.8 1286.6,453.8 1300.1,453.8 1313.6,453.8 1327.1,453.8 1340.6,453.8 1354.1,453.8 1367.6,453.8 1381.1,453.8 1394.6,453.8 1408.1,453.8 1421.6,453.8 1435.1,453.8 1448.6,453.8 1462.1,453.8 1475.6,453.8 1489.1,453.8 1502.6,453.8 1516.1,453.8 1529.6,453.8 1543.1,453.8 1556.6,453.8 1570.1,453.8 1583.6,453.8 1597.1,453.8 1610.6,453.8 1624.1,453.8 1637.6,453.8 1651.1,453.8 1664.6,453.8 1678.1,453.8 1691.6,453.8 1705.1,453.8 1718.6,453.8 1732.1,453.8 1745.6,453.8 1759.1,453.8 1772.6,453.8 1786.1,453.8" fill="none" stroke="#a89070" stroke-width="1" stroke-linejoin="round"/>
<polyline points="1232.6,446.9 1246.1,446.9 1259.6,446.9 1273.1,446.9 1286.6,446.9 1300.1,446.9 1313.6,446.9 1327.1,446.9 1340.6,446.9 1354.1,446.9 1367.6,446.9 1381.1,446.9 1394.6,446.9 1408.1,446.9 1421.6,446.9 1435.1,446.9 1448.6,446.9 1462.1,446.9 1475.6,446.9 1489.1,446.9 1502.6,446.9 1516.1,446.9 1529.6,446.9 1543.1,446.9 1556.6,419.3 1570.1,419.3 1583.6,419.3 1597.1,419.3 1610.6,446.9 1624.1,446.9 1637.6,446.9 1651.1,446.9 1664.6,446.9 1678.1,446.9 1691.6,446.9 1705.1,446.9 1718.6,446.9 1732.1,437.6 1745.6,437.6 1759.1,437.6 1772.6,437.6 1786.1,449.6" fill="none" stroke="#EF8B3C" stroke-width="1.5" stroke-linejoin="round"/>
<polyline points="1232.6,436.6 1246.1,437.6 1259.6,448.5 1273.1,452.2 1286.6,452.9" fill="none" stroke="#E24D42" stroke-width="1.5" stroke-linejoin="round"/>
<polyline points="1232.6,430.9 1246.1,430.9 1259.6,433.0 1273.1,438.0 1286.6,445.0 1300.1,446.8 1313.6,446.8 1327.1,446.8 1340.6,446.8 1354.1,446.8 1367.6,446.8 1381.1,446.8 1394.6,446.8 1408.1,446.8 1421.6,446.8 1435.1,446.8 1448.6,446.8 1462.1,446.8 1475.6,446.8 1489.1,446.8 1502.6,446.8 1516.1,446.8 1529.6,446.8 1543.1,446.8 1556.6,446.8 1570.1,446.8 1583.6,446.8 1597.1,446.8 1610.6,446.8 1624.1,446.8 1637.6,446.8 1651.1,446.8 1664.6,446.8 1678.1,446.8 1691.6,446.8 1705.1,446.8 1718.6,446.8 1732.1,446.8 1745.6,446.8 1759.1,446.8 1772.6,446.8 1786.1,446.8" fill="none" stroke="#C8A010" stroke-width="1.6" stroke-linejoin="round"/>
<polyline points="1232.6,441.3 1246.1,447.5 1259.6,442.7 1273.1,432.3 1286.6,444.1 1300.1,433.5 1313.6,432.3 1327.1,441.0 1340.6,432.6 1354.1,431.2 1367.6,424.4 1381.1,434.0 1394.6,432.3 1408.1,421.1 1421.6,430.9 1435.1,420.8 1448.6,410.0 1462.1,416.4 1475.6,422.5 1489.1,411.4 1502.6,410.7 1516.1,389.8 1529.6,410.7 1543.1,406.6 1556.6,402.7 1570.1,390.2 1583.6,409.5 1597.1,399.9 1610.6,378.9 1624.1,393.4 1637.6,401.7 1651.1,378.2 1664.6,411.0 1678.1,402.3 1691.6,389.3 1705.1,382.1 1718.6,393.7 1732.1,381.8 1745.6,367.7 1759.1,350.8 1772.6,356.2 1786.1,366.3" fill="none" stroke="#1F78C1" stroke-width="1.5" stroke-linejoin="round"/>
<polyline points="1232.6,441.3 1246.1,447.5 1259.6,442.7 1273.1,435.2 1286.6,444.1 1300.1,433.5 1313.6,432.3 1327.1,443.1 1340.6,432.6 1354.1,431.2 1367.6,432.6 1381.1,434.9 1394.6,432.3 1408.1,426.5 1421.6,431.6 1435.1,420.8 1448.6,410.0 1462.1,417.9 1475.6,432.3 1489.1,412.1 1502.6,410.7 1516.1,389.8 1529.6,410.7 1543.1,407.1 1556.6,408.9 1570.1,400.6 1583.6,410.7 1597.1,399.9 1610.6,378.9 1624.1,411.4 1637.6,402.3 1651.1,378.2 1664.6,411.0 1678.1,402.3 1691.6,389.3 1705.1,389.3 1718.6,395.5 1732.1,399.9 1745.6,367.7 1759.1,359.9 1772.6,356.6 1786.1,379.2" fill="none" stroke="#E0752D" stroke-width="1.5" stroke-linejoin="round"/>
<line x1="1221.5" y1="346.0" x2="1221.5" y2="454.3" stroke="#19b0dc" stroke-width="1.1" stroke-dasharray="3,2"/>
<polygon points="1216.0,461.3 1227.0,461.3 1221.5,455.3" fill="#1fb3e0"/>
<clipPath id="clip918"><rect x="918" y="480" width="906" height="88"/></clipPath>
<g clip-path="url(#clip918)">
<rect x="933.6" y="494.6" width="875.2" height="27.6" fill="rgba(204,204,220,0.035)"/>
<rect x="947.8" y="507.8" width="11.5" height="1.7" fill="#806EB7"/>
<text x="970.5" y="512.5" text-anchor="start" class="lbl" >6_查询购物车信息</text>
<text x="1708.2" y="512.5" text-anchor="end" class="lbl" >57.00 ms</text>
<text x="1797.7" y="512.5" text-anchor="end" class="lbl" >43.25 ms</text>
<rect x="947.8" y="535.2" width="11.5" height="1.7" fill="#629E51"/>
<text x="970.5" y="539.9" text-anchor="start" class="lbl" >7_购物车信息确定订单</text>
<text x="1708.2" y="539.9" text-anchor="end" class="lbl" >58.95 ms</text>
<text x="1797.7" y="539.9" text-anchor="end" class="lbl" >52.10 ms</text>
<rect x="933.6" y="549.4" width="875.2" height="18.9" fill="rgba(204,204,220,0.035)"/>
<rect x="947.8" y="562.6" width="11.5" height="1.7" fill="#EAB839"/>
<text x="970.5" y="567.3" text-anchor="start" class="lbl" >8_生成订单信息</text>
<text x="1708.2" y="567.3" text-anchor="end" class="lbl" >214.00 ms</text>
<text x="1797.7" y="567.3" text-anchor="end" class="lbl" >78.58 ms</text>
</g>
<rect x="1805.6" y="525.2" width="8.5" height="31.4" rx="4.2" fill="#3a3c45"/>
<text x="446.0" y="609.4" text-anchor="middle" class="title">Total Errors</text>
<line x1="39.4" y1="637.9" x2="873.6" y2="637.9" stroke="#3c3d41" stroke-width="1"/>
<line x1="39.4" y1="684.4" x2="873.6" y2="684.4" stroke="#3c3d41" stroke-width="1"/>
<line x1="39.4" y1="731.0" x2="873.6" y2="731.0" stroke="#3c3d41" stroke-width="1"/>
<line x1="92.7" y1="637.9" x2="92.7" y2="731.0" stroke="#3c3d41" stroke-width="1" />
<line x1="176.1" y1="637.9" x2="176.1" y2="731.0" stroke="#3c3d41" stroke-width="1" />
<line x1="259.5" y1="637.9" x2="259.5" y2="731.0" stroke="#3c3d41" stroke-width="1" />
<line x1="342.9" y1="637.9" x2="342.9" y2="731.0" stroke="#3c3d41" stroke-width="1" />
<line x1="426.3" y1="637.9" x2="426.3" y2="731.0" stroke="#3c3d41" stroke-width="1" />
<line x1="509.7" y1="637.9" x2="509.7" y2="731.0" stroke="#3c3d41" stroke-width="1" />
<line x1="593.1" y1="637.9" x2="593.1" y2="731.0" stroke="#3c3d41" stroke-width="1" />
<line x1="676.5" y1="637.9" x2="676.5" y2="731.0" stroke="#3c3d41" stroke-width="1" />
<line x1="759.9" y1="637.9" x2="759.9" y2="731.0" stroke="#3c3d41" stroke-width="1" />
<line x1="843.3" y1="637.9" x2="843.3" y2="731.0" stroke="#3c3d41" stroke-width="1" />
<text x="24.5" y="642.5" text-anchor="end" class="lbl" >1</text>
<text x="24.5" y="689.0" text-anchor="end" class="lbl" >0</text>
<text x="24.5" y="735.6" text-anchor="end" class="lbl" >-1</text>
<text x="92.7" y="759.0" text-anchor="middle" class="lbl" >23:47:00</text>
<text x="176.1" y="759.0" text-anchor="middle" class="lbl" >23:47:30</text>
<text x="259.5" y="759.0" text-anchor="middle" class="lbl" >23:48:00</text>
<text x="342.9" y="759.0" text-anchor="middle" class="lbl" >23:48:30</text>
<text x="426.3" y="759.0" text-anchor="middle" class="lbl" >23:49:00</text>
<text x="509.7" y="759.0" text-anchor="middle" class="lbl" >23:49:30</text>
<text x="593.1" y="759.0" text-anchor="middle" class="lbl" >23:50:00</text>
<text x="676.5" y="759.0" text-anchor="middle" class="lbl" >23:50:30</text>
<text x="759.9" y="759.0" text-anchor="middle" class="lbl" >23:51:00</text>
<text x="843.3" y="759.0" text-anchor="middle" class="lbl" >23:51:30</text>
<line x1="300.8" y1="684.2" x2="871.1" y2="684.2" stroke="#AD2A18" stroke-width="2"/>
<line x1="289.4" y1="636.0" x2="289.4" y2="731.5" stroke="#19b0dc" stroke-width="1.1" stroke-dasharray="3,2"/>
<polygon points="283.9,738.5 294.9,738.5 289.4,732.5" fill="#1fb3e0"/>
<rect x="33.0" y="803.2" width="11.5" height="1.7" fill="#BF1B00"/>
<text x="55.0" y="808.6" text-anchor="start" class="lbl" >Num of Errors</text>
<text x="882.5" y="784.0" text-anchor="end" class="hdr" >total</text>
<text x="882.5" y="808.4" text-anchor="end" class="lbl" >0</text>
<text x="1361.0" y="609.4" text-anchor="middle" class="title">Network Traffic</text>
<rect x="979.3" y="637.7" width="427.5" height="146.9" fill="rgb(234,112,112)" fill-opacity="0.12"/>
<line x1="979.3" y1="637.7" x2="1406.8" y2="637.7" stroke="#3c3d41" stroke-width="1"/>
<line x1="979.3" y1="674.4" x2="1406.8" y2="674.4" stroke="#3c3d41" stroke-width="1"/>
<line x1="979.3" y1="711.2" x2="1406.8" y2="711.2" stroke="#3c3d41" stroke-width="1"/>
<line x1="979.3" y1="747.9" x2="1406.8" y2="747.9" stroke="#3c3d41" stroke-width="1"/>
<line x1="979.3" y1="784.6" x2="1406.8" y2="784.6" stroke="#3c3d41" stroke-width="1"/>
<line x1="1006.3" y1="637.7" x2="1006.3" y2="784.6" stroke="#3c3d41" stroke-width="1" />
<line x1="1091.8" y1="637.7" x2="1091.8" y2="784.6" stroke="#3c3d41" stroke-width="1" />
<line x1="1177.3" y1="637.7" x2="1177.3" y2="784.6" stroke="#3c3d41" stroke-width="1" />
<line x1="1262.8" y1="637.7" x2="1262.8" y2="784.6" stroke="#3c3d41" stroke-width="1" />
<line x1="1348.3" y1="637.7" x2="1348.3" y2="784.6" stroke="#3c3d41" stroke-width="1" />
<text x="972.5" y="642.3" text-anchor="end" class="lbl" >9.5 MiB</text>
<text x="972.5" y="679.0" text-anchor="end" class="lbl" >7.2 MiB</text>
<text x="972.5" y="715.8" text-anchor="end" class="lbl" >4.8 MiB</text>
<text x="972.5" y="752.5" text-anchor="end" class="lbl" >2.4 MiB</text>
<text x="972.5" y="789.2" text-anchor="end" class="lbl" >0 B</text>
<text x="1006.3" y="812.0" text-anchor="middle" class="lbl" >23:47</text>
<text x="1091.8" y="812.0" text-anchor="middle" class="lbl" >23:48</text>
<text x="1177.3" y="812.0" text-anchor="middle" class="lbl" >23:49</text>
<text x="1262.8" y="812.0" text-anchor="middle" class="lbl" >23:50</text>
<text x="1348.3" y="812.0" text-anchor="middle" class="lbl" >23:51</text>
<polygon points="1113.5,784.6 1113.5,774.5 1120.7,740.5 1127.8,739.5 1135.0,745.1 1142.1,718.1 1149.2,713.9 1156.4,740.0 1163.5,713.6 1170.7,712.6 1177.8,708.4 1185.0,717.6 1192.2,687.0 1199.3,694.1 1206.5,712.6 1213.6,708.9 1220.8,704.3 1227.9,721.5 1235.0,703.5 1242.2,664.3 1249.3,690.7 1256.5,706.4 1263.7,722.0 1270.8,717.3 1278.0,711.9 1285.1,704.2 1292.2,708.9 1299.4,713.9 1306.5,716.5 1313.7,714.3 1320.8,712.8 1328.0,705.5 1335.2,720.7 1342.3,700.8 1349.5,693.4 1356.6,700.5 1363.8,707.7 1370.9,708.4 1378.0,679.4 1385.2,702.2 1392.3,725.7 1399.5,727.4 1406.7,722.3 1406.7,784.6" fill="#B877D9" fill-opacity="0.1"/>
<polygon points="1113.5,784.6 1113.5,778.7 1120.7,756.8 1127.8,757.2 1135.0,760.2 1142.1,742.9 1149.2,740.3 1156.4,760.2 1163.5,740.5 1170.7,740.5 1177.8,737.5 1185.0,743.0 1192.2,723.5 1199.3,729.4 1206.5,740.8 1213.6,738.0 1220.8,735.0 1227.9,746.2 1235.0,735.0 1242.2,709.7 1249.3,726.5 1256.5,736.6 1263.7,746.2 1270.8,743.4 1278.0,740.5 1285.1,734.6 1292.2,737.5 1299.4,740.3 1306.5,743.4 1313.7,740.5 1320.8,740.5 1328.0,734.6 1335.2,746.2 1342.3,731.9 1349.5,729.1 1356.6,731.9 1363.8,737.5 1370.9,737.5 1378.0,721.0 1385.2,732.4 1392.3,749.3 1399.5,749.3 1406.7,746.2 1406.7,784.6" fill="#FFB357" fill-opacity="0.1"/>
<polygon points="1113.5,784.6 1113.5,781.2 1120.7,772.5 1127.8,772.5 1135.0,774.2 1142.1,765.7 1149.2,764.9 1156.4,770.3 1163.5,764.9 1170.7,764.4 1177.8,763.2 1185.0,766.1 1192.2,757.7 1199.3,758.0 1206.5,764.1 1213.6,764.1 1220.8,762.4 1227.9,766.9 1235.0,761.4 1242.2,751.3 1249.3,759.4 1256.5,763.6 1263.7,767.4 1270.8,765.2 1278.0,763.2 1285.1,761.9 1292.2,763.6 1299.4,765.6 1306.5,765.2 1313.7,765.6 1320.8,764.7 1328.0,763.2 1335.2,766.1 1342.3,761.5 1349.5,758.0 1356.6,761.5 1363.8,762.4 1370.9,763.2 1378.0,754.0 1385.2,763.6 1392.3,767.4 1399.5,768.6 1406.7,767.4 1406.7,784.6" fill="#FFEE52" fill-opacity="0.1"/>
<polyline points="1113.5,780.7 1120.7,781.8 1127.8,781.8 1135.0,780.7 1142.1,781.8 1149.2,781.8 1156.4,780.7 1163.5,781.8 1170.7,781.8 1177.8,780.7 1185.0,781.8 1192.2,781.8 1199.3,780.7 1206.5,781.8 1213.6,781.8 1220.8,780.7 1227.9,781.8 1235.0,781.8 1242.2,780.7 1249.3,781.8 1256.5,781.8 1263.7,780.7 1270.8,781.8 1278.0,781.8 1285.1,780.7 1292.2,781.8 1299.4,781.8 1306.5,780.7 1313.7,781.8 1320.8,781.8 1328.0,780.7 1335.2,781.8 1342.3,781.8 1349.5,780.7 1356.6,781.8 1363.8,781.8 1370.9,780.7 1378.0,781.8 1385.2,781.8 1392.3,780.7 1399.5,781.8 1406.7,781.8" fill="none" stroke="#C4162A" stroke-width="1" stroke-linejoin="round"/>
<polyline points="1113.5,783.2 1120.7,783.2 1127.8,783.2 1135.0,783.2 1142.1,783.2 1149.2,783.2 1156.4,783.2 1163.5,783.2 1170.7,783.2 1177.8,783.2 1185.0,783.2 1192.2,783.2 1199.3,783.2 1206.5,783.2 1213.6,783.2 1220.8,783.2 1227.9,783.2 1235.0,783.2 1242.2,783.2 1249.3,783.2 1256.5,783.2 1263.7,783.2 1270.8,783.2 1278.0,783.2 1285.1,783.2 1292.2,783.2 1299.4,783.2 1306.5,783.2 1313.7,783.2 1320.8,783.2 1328.0,783.2 1335.2,783.2 1342.3,783.2 1349.5,783.2 1356.6,783.2 1363.8,783.2 1370.9,783.2 1378.0,783.2 1385.2,783.2 1392.3,783.2 1399.5,783.2 1406.7,783.2" fill="none" stroke="#D683CE" stroke-width="1.2" stroke-linejoin="round"/>
<polyline points="1113.5,784.0 1120.7,784.0 1127.8,784.0 1135.0,784.0 1142.1,784.0 1149.2,784.0 1156.4,784.0 1163.5,784.0 1170.7,784.0 1177.8,784.0 1185.0,784.0 1192.2,784.0 1199.3,784.0 1206.5,784.0 1213.6,784.0 1220.8,784.0 1227.9,784.0 1235.0,784.0 1242.2,784.0 1249.3,784.0 1256.5,784.0 1263.7,784.0 1270.8,784.0 1278.0,784.0 1285.1,784.0 1292.2,784.0 1299.4,784.0 1306.5,784.0 1313.7,784.0 1320.8,784.0 1328.0,784.0 1335.2,784.0 1342.3,784.0 1349.5,784.0 1356.6,784.0 1363.8,784.0 1370.9,784.0 1378.0,784.0 1385.2,784.0 1392.3,784.0 1399.5,784.0 1406.7,784.0" fill="none" stroke="#8AB8FF" stroke-width="1" stroke-linejoin="round"/>
<polyline points="1113.5,781.2 1120.7,772.5 1127.8,772.5 1135.0,774.2 1142.1,765.7 1149.2,764.9 1156.4,770.3 1163.5,764.9 1170.7,764.4 1177.8,763.2 1185.0,766.1 1192.2,757.7 1199.3,758.0 1206.5,764.1 1213.6,764.1 1220.8,762.4 1227.9,766.9 1235.0,761.4 1242.2,751.3 1249.3,759.4 1256.5,763.6 1263.7,767.4 1270.8,765.2 1278.0,763.2 1285.1,761.9 1292.2,763.6 1299.4,765.6 1306.5,765.2 1313.7,765.6 1320.8,764.7 1328.0,763.2 1335.2,766.1 1342.3,761.5 1349.5,758.0 1356.6,761.5 1363.8,762.4 1370.9,763.2 1378.0,754.0 1385.2,763.6 1392.3,767.4 1399.5,768.6 1406.7,767.4" fill="none" stroke="#F2CC8F" stroke-width="1.3" stroke-linejoin="round"/>
<polyline points="1113.5,778.7 1120.7,756.8 1127.8,757.2 1135.0,760.2 1142.1,742.9 1149.2,740.3 1156.4,760.2 1163.5,740.5 1170.7,740.5 1177.8,737.5 1185.0,743.0 1192.2,723.5 1199.3,729.4 1206.5,740.8 1213.6,738.0 1220.8,735.0 1227.9,746.2 1235.0,735.0 1242.2,709.7 1249.3,726.5 1256.5,736.6 1263.7,746.2 1270.8,743.4 1278.0,740.5 1285.1,734.6 1292.2,737.5 1299.4,740.3 1306.5,743.4 1313.7,740.5 1320.8,740.5 1328.0,734.6 1335.2,746.2 1342.3,731.9 1349.5,729.1 1356.6,731.9 1363.8,737.5 1370.9,737.5 1378.0,721.0 1385.2,732.4 1392.3,749.3 1399.5,749.3 1406.7,746.2" fill="none" stroke="#F9B28A" stroke-width="1.3" stroke-linejoin="round"/>
<polyline points="1113.5,774.5 1120.7,740.5 1127.8,739.5 1135.0,745.1 1142.1,718.1 1149.2,713.9 1156.4,740.0 1163.5,713.6 1170.7,712.6 1177.8,708.4 1185.0,717.6 1192.2,687.0 1199.3,694.1 1206.5,712.6 1213.6,708.9 1220.8,704.3 1227.9,721.5 1235.0,703.5 1242.2,664.3 1249.3,690.7 1256.5,706.4 1263.7,722.0 1270.8,717.3 1278.0,711.9 1285.1,704.2 1292.2,708.9 1299.4,713.9 1306.5,716.5 1313.7,714.3 1320.8,712.8 1328.0,705.5 1335.2,720.7 1342.3,700.8 1349.5,693.4 1356.6,700.5 1363.8,707.7 1370.9,708.4 1378.0,679.4 1385.2,702.2 1392.3,725.7 1399.5,727.4 1406.7,722.3" fill="none" stroke="#B9A6E8" stroke-width="1.3" stroke-linejoin="round"/>
<line x1="979.3" y1="783.3" x2="1113" y2="783.3" stroke="#E0501D" stroke-width="3"/>
<line x1="979.3" y1="785" x2="1113" y2="785" stroke="#37872D" stroke-width="1"/>
<line x1="1107.8" y1="637.0" x2="1107.8" y2="784.8" stroke="#19b0dc" stroke-width="1.1" stroke-dasharray="3,2"/>
<polygon points="1102.3,791.8 1113.3,791.8 1107.8,785.8" fill="#1fb3e0"/>
<text x="1706.6" y="648.8" text-anchor="end" class="hdr" >max</text>
<text x="1780.0" y="648.8" text-anchor="end" class="hdr" >avg</text>
<polyline points="1786,643.3 1789.5,646.8 1793,643.3" fill="none" stroke="#33a2e5" stroke-width="1.4"/>
<clipPath id="clipnet"><rect x="1420" y="655" width="400" height="162.5"/></clipPath><g clip-path="url(#clipnet)">
<rect x="1444.0" y="668.2" width="11.5" height="1.7" fill="#B9A6E8"/>
<text x="1466.0" y="673.6" text-anchor="start" class="lbl" >all</text>
<text x="1706.6" y="673.6" text-anchor="end" class="lbl" >7.80 MiB</text>
<text x="1797.5" y="673.6" text-anchor="end" class="lbl" >4.66 MiB</text>
<rect x="1429.7" y="682.7" width="379.1" height="27.5" fill="rgba(204,204,220,0.035)"/>
<rect x="1444.0" y="695.6" width="11.5" height="1.7" fill="#F9B28A"/>
<text x="1466.0" y="701.0" text-anchor="start" class="lbl" >6_查询购物车信息</text>
<text x="1706.6" y="701.0" text-anchor="end" class="lbl" >4.85 MiB</text>
<text x="1797.5" y="701.0" text-anchor="end" class="lbl" >2.89 MiB</text>
<rect x="1444.0" y="723.1" width="11.5" height="1.7" fill="#F2CC8F"/>
<text x="1466.0" y="728.5" text-anchor="start" class="lbl" >4_查询商品</text>
<text x="1706.6" y="728.5" text-anchor="end" class="lbl" >2.18 MiB</text>
<text x="1797.5" y="728.5" text-anchor="end" class="lbl" >1.32 MiB</text>
<rect x="1429.7" y="737.6" width="379.1" height="27.5" fill="rgba(204,204,220,0.035)"/>
<rect x="1444.0" y="750.5" width="11.5" height="1.7" fill="#E0752D"/>
<text x="1466.0" y="755.9" text-anchor="start" class="lbl" >all</text>
<text x="1706.6" y="755.9" text-anchor="end" class="lbl" >401.76 KiB</text>
<text x="1797.5" y="755.9" text-anchor="end" class="lbl" >241.48 KiB</text>
<rect x="1444.0" y="778.0" width="11.5" height="1.7" fill="#8a3a8c"/>
<text x="1466.0" y="783.4" text-anchor="start" class="lbl" >1_打开首页</text>
<text x="1706.6" y="783.4" text-anchor="end" class="lbl" >362.25 KiB</text>
<text x="1797.5" y="783.4" text-anchor="end" class="lbl" >219.85 KiB</text>
<rect x="1429.7" y="792.6" width="379.1" height="27.5" fill="rgba(204,204,220,0.035)"/>
<rect x="1444.0" y="805.5" width="11.5" height="1.7" fill="#3274D9"/>
<text x="1466.0" y="810.9" text-anchor="start" class="lbl" >4_查询商品</text>
<text x="1706.6" y="810.9" text-anchor="end" class="lbl" >189.49 KiB</text>
<text x="1797.5" y="810.9" text-anchor="end" class="lbl" >114.12 KiB</text>
</g>
<rect x="1805.7" y="635.8" width="8.3" height="49.3" rx="4.1" fill="#3a3c45"/>
</svg>
</body></html>
